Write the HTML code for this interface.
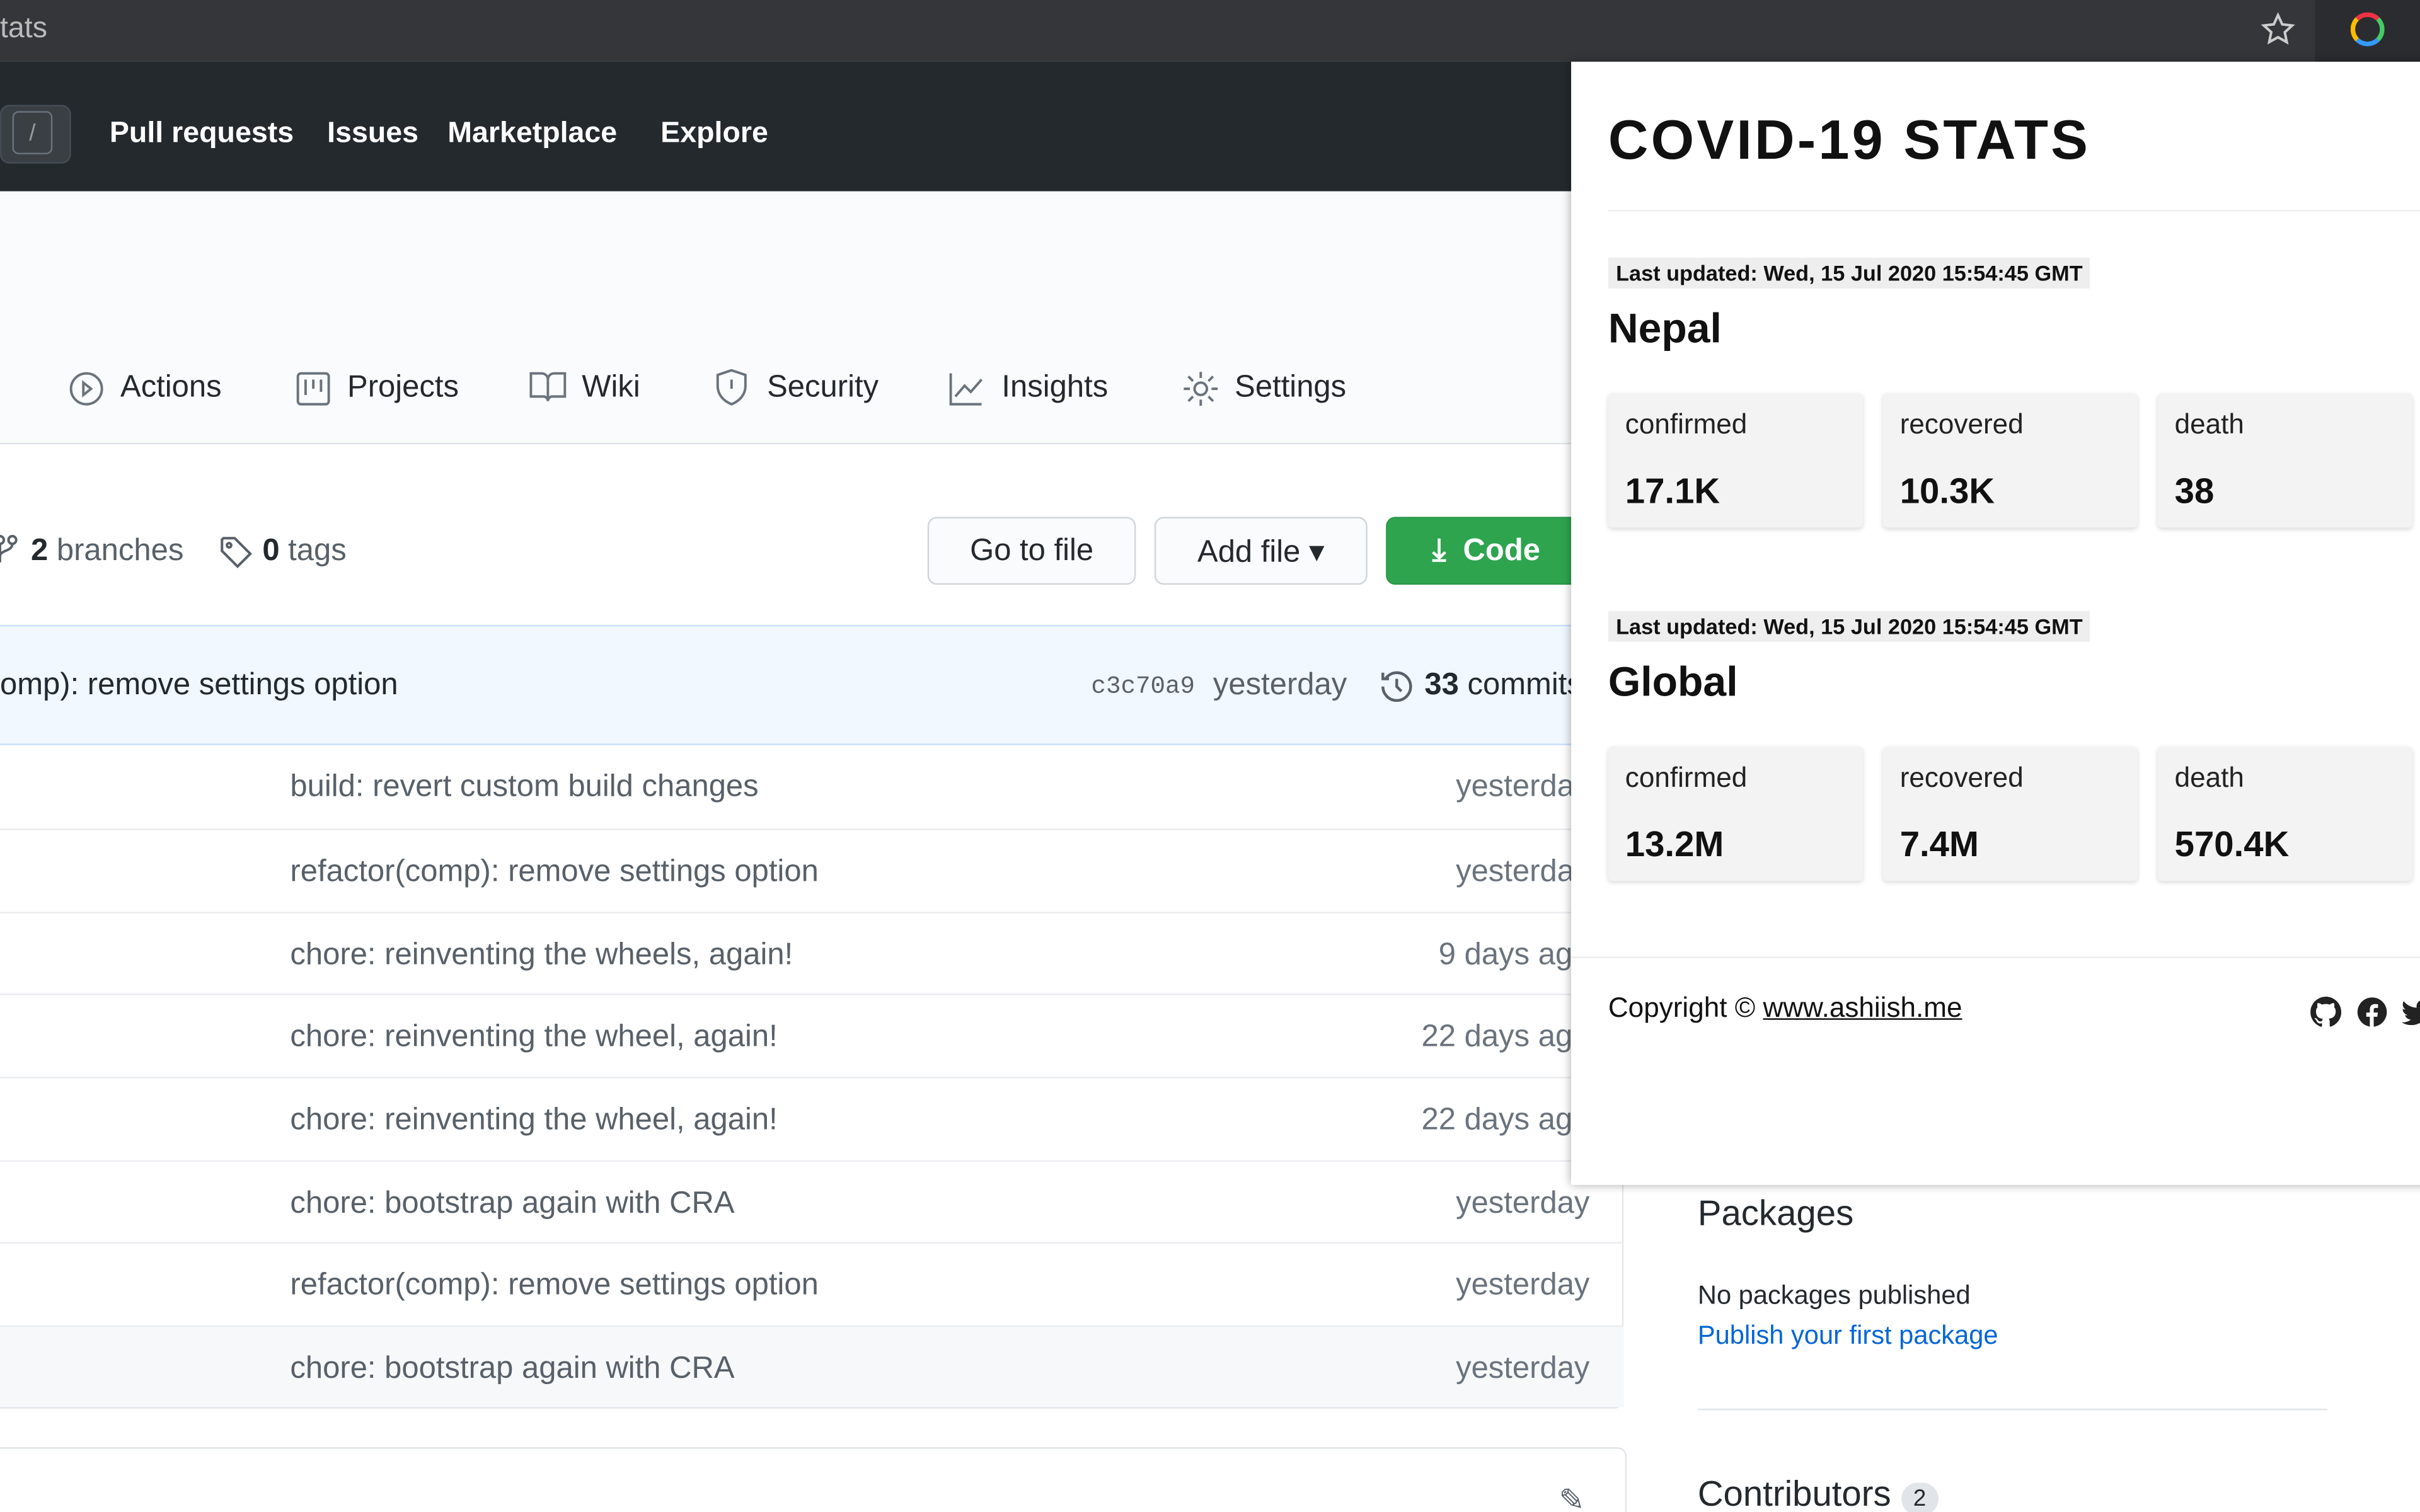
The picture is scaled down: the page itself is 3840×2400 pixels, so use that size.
<!DOCTYPE html>
<html><head><meta charset="utf-8"><style>
html,body{margin:0;padding:0;width:3840px;height:2400px;overflow:hidden;background:#fff}
#w{position:absolute;left:0;top:0;width:1568px;height:980px;transform:scale(2.44898);transform-origin:0 0;font-family:"Liberation Sans",sans-serif;overflow:hidden;background:#fff}
.a{position:absolute;white-space:nowrap}
.nav{color:#fff;font-weight:bold;font-size:19px;top:76px}
.tab{top:240px;font-size:20px;color:#24292e}
.btn{position:absolute;top:335px;height:44px;border:1px solid #d1d5da;border-radius:6px;background:#fafbfc;box-sizing:border-box;font-size:20px;color:#24292e;display:flex;align-items:center;justify-content:center}
.row{position:absolute;left:0;width:1052px;height:53px;border-top:1px solid #eaecef;box-sizing:border-box}
.row .m{position:absolute;left:188px;top:16px;font-size:20px;color:#586069}
.row .t{position:absolute;right:22px;top:16px;font-size:20px;color:#6a737d}
.pop{position:absolute;left:1018px;top:40px;width:560px;height:728px;background:#fff;box-shadow:0 0 6px rgba(0,0,0,.35)}
.lu{position:absolute;left:24px;height:20px;background:#eeeeee;font-size:14px;font-weight:bold;padding:0 5px;line-height:20px;color:#111}
.h{position:absolute;left:24px;font-size:27px;font-weight:bold;color:#111}
.card{position:absolute;width:165px;height:87px;background:#f3f3f3;box-shadow:0 1px 3px rgba(0,0,0,.15);border-radius:3px}
.card .l{position:absolute;left:11px;top:10px;font-size:18px;color:#222}
.card .v{position:absolute;left:11px;top:50px;font-size:23px;font-weight:bold;color:#111}
</style></head><body><div id="w">
<div class="a" style="left:0;top:0;width:1568px;height:40px;background:#35363a"></div>
<div class="a" style="left:0;top:8px;font-size:19px;color:#bbb">tats</div>
<svg class="a" style="left:1465px;top:8px" width="22" height="22" viewBox="0 0 24 24" fill="none" stroke="#ccc" stroke-width="1.8"><path d="M12 2l3 6.5 7 .8-5.2 4.8 1.4 7L12 17.6 5.8 21l1.4-7L2 9.3l7-.8z"/></svg>
<div class="a" style="left:1500px;top:0;width:68px;height:40px;background:#2b2c30"></div>
<div class="a" style="left:1523px;top:8px;width:22px;height:22px;border-radius:50%;border:3px solid;border-color:#e34 #4c6 #39f #fb0;box-sizing:border-box"></div>
<div class="a" style="left:0;top:40px;width:1568px;height:84px;background:#24292e"></div>
<div class="a" style="left:0;top:68px;width:46px;height:38px;border:1px solid #444d56;border-radius:6px;background:#3a3f44;box-sizing:border-box"></div>
<div class="a" style="left:8px;top:72px;width:26px;height:28px;border:1px solid #6a737d;border-radius:4px;color:#959da5;font-size:15px;text-align:center;line-height:28px;box-sizing:border-box">/</div>
<div class="a nav" style="left:71px">Pull requests</div>
<div class="a nav" style="left:212px">Issues</div>
<div class="a nav" style="left:290px">Marketplace</div>
<div class="a nav" style="left:428px">Explore</div>
<div class="a" style="left:0;top:124px;width:1568px;height:163px;background:#fafbfc;border-bottom:1px solid #e1e4e8"></div>
<svg class="a" style="left:44px;top:240px" width="24" height="24" viewBox="0 0 24 24" fill="none" stroke="#6a737d" stroke-width="1.6"><circle cx="12" cy="12" r="10"/><path d="M10 8l5 4-5 4z"/></svg>
<div class="a tab" style="left:78px">Actions</div>
<svg class="a" style="left:191px;top:240px" width="24" height="24" viewBox="0 0 24 24" fill="none" stroke="#6a737d" stroke-width="1.6"><rect x="2" y="2" width="20" height="20" rx="2"/><path d="M7 6v10M12 6v6M17 6v8"/></svg>
<div class="a tab" style="left:225px">Projects</div>
<svg class="a" style="left:343px;top:240px" width="24" height="22" viewBox="0 0 24 22" fill="none" stroke="#6a737d" stroke-width="1.6"><path d="M1 2h7a4 4 0 014 4v14a3 3 0 00-3-3H1zM23 2h-7a4 4 0 00-4 4v14a3 3 0 013-3h8z"/></svg>
<div class="a tab" style="left:377px">Wiki</div>
<svg class="a" style="left:463px;top:239px" width="22" height="24" viewBox="0 0 22 24" fill="none" stroke="#6a737d" stroke-width="1.6"><path d="M11 1L2 4v7c0 6 4 10 9 12 5-2 9-6 9-12V4z"/><path d="M11 7v6"/></svg>
<div class="a tab" style="left:497px">Security</div>
<svg class="a" style="left:614px;top:240px" width="24" height="24" viewBox="0 0 24 24" fill="none" stroke="#6a737d" stroke-width="1.6"><path d="M2 2v20h20M5 17l6-7 4 4 7-8"/></svg>
<div class="a tab" style="left:649px">Insights</div>
<svg class="a" style="left:766px;top:240px" width="24" height="24" viewBox="0 0 24 24" fill="none" stroke="#6a737d" stroke-width="1.6"><circle cx="12" cy="12" r="4"/><path d="M12 1v4M12 19v4M1 12h4M19 12h4M4 4l3 3M17 17l3 3M4 20l3-3M17 7l3-3"/></svg>
<div class="a tab" style="left:800px">Settings</div>
<svg class="a" style="left:-4px;top:346px" width="16" height="20" viewBox="0 0 16 20" fill="none" stroke="#586069" stroke-width="1.6"><circle cx="4" cy="4" r="2.5"/><circle cx="12" cy="4" r="2.5"/><path d="M4 6.5v12M12 6.5c0 5-8 4-8 8"/></svg>
<div class="a" style="left:20px;top:346px;font-size:20px;color:#586069"><b style="color:#24292e">2</b> branches</div>
<svg class="a" style="left:142px;top:347px" width="22" height="22" viewBox="0 0 24 24" fill="none" stroke="#586069" stroke-width="1.8"><path d="M2 3v8l11 11 9-9L11 2H3z"/><circle cx="7" cy="7" r="1.5"/></svg>
<div class="a" style="left:170px;top:346px;font-size:20px;color:#586069"><b style="color:#24292e">0</b> tags</div>
<div class="btn" style="left:601px;width:135px">Go to file</div>
<div class="btn" style="left:748px;width:138px">Add file ▾</div>
<div class="btn" style="left:898px;width:130px;background:#2ea44f;border-color:#2c974b;color:#fff;font-weight:bold">⤓&nbsp; Code</div>
<div class="a" style="left:-10px;top:405px;width:1062px;height:78px;background:#f1f8ff;border:1px solid #c8e1ff;box-sizing:border-box"></div>
<div class="a" style="left:0;top:433px;font-size:20px;color:#24292e">omp): remove settings option</div>
<div class="a" style="left:707px;top:436px;font-size:16px;font-family:'Liberation Mono',monospace;color:#586069">c3c70a9</div>
<div class="a" style="left:786px;top:433px;font-size:20px;color:#586069">yesterday</div>
<svg class="a" style="left:893px;top:433px" width="24" height="24" viewBox="0 0 24 24" fill="none" stroke="#586069" stroke-width="1.8"><path d="M3 12a9 9 0 109-9 9 9 0 00-7 3.5M3 3v4h4M12 7v5l3 3"/></svg>
<div class="a" style="left:923px;top:433px;font-size:20px;color:#24292e"><b>33</b> commits</div>
<div class="a" style="left:-10px;top:483px;width:1062px;height:430px;border:1px solid #e1e4e8;border-top:none;border-radius:0 0 6px 6px;box-sizing:border-box"></div>
<div class="row" style="top:483px;border-top:none"><span class="m">build: revert custom build changes</span><span class="t">yesterday</span></div>
<div class="row" style="top:537px"><span class="m">refactor(comp): remove settings option</span><span class="t">yesterday</span></div>
<div class="row" style="top:591px"><span class="m">chore: reinventing the wheels, again!</span><span class="t">9 days ago</span></div>
<div class="row" style="top:644px"><span class="m">chore: reinventing the wheel, again!</span><span class="t">22 days ago</span></div>
<div class="row" style="top:698px"><span class="m">chore: reinventing the wheel, again!</span><span class="t">22 days ago</span></div>
<div class="row" style="top:752px"><span class="m">chore: bootstrap again with CRA</span><span class="t">yesterday</span></div>
<div class="row" style="top:805px"><span class="m">refactor(comp): remove settings option</span><span class="t">yesterday</span></div>
<div class="row" style="top:859px;background:#f6f8fa;height:53px"><span class="m">chore: bootstrap again with CRA</span><span class="t">yesterday</span></div>
<div class="a" style="left:-10px;top:938px;width:1062px;height:80px;border:1px solid #e1e4e8;border-radius:6px"></div>
<div class="a" style="left:1010px;top:960px;font-size:20px;color:#586069">✎</div>
<div class="a" style="left:1100px;top:773px;font-size:23px;color:#24292e">Packages</div>
<div class="a" style="left:1100px;top:830px;font-size:17px;color:#24292e">No packages published</div>
<div class="a" style="left:1100px;top:856px;font-size:17px;color:#0366d6">Publish your first package</div>
<div class="a" style="left:1100px;top:913px;width:408px;height:1px;background:#e1e4e8"></div>
<div class="a" style="left:1100px;top:955px;font-size:23px;color:#24292e">Contributors <span style="display:inline-block;background:#e1e4e8;border-radius:12px;font-size:15px;padding:2px 8px">2</span></div>
<div class="pop">
<div class="a" style="left:24px;top:30px;font-size:36px;font-weight:900;color:#111;letter-spacing:1.7px">COVID-19 STATS</div>
<div class="a" style="left:24px;top:96px;width:540px;height:1px;background:#eee"></div>
<div class="lu" style="top:127px">Last updated: Wed, 15 Jul 2020 15:54:45 GMT</div>
<div class="h" style="top:158px">Nepal</div>
<div class="card" style="left:24px;top:215px"><span class="l">confirmed</span><span class="v">17.1K</span></div>
<div class="card" style="left:202px;top:215px"><span class="l">recovered</span><span class="v">10.3K</span></div>
<div class="card" style="left:380px;top:215px"><span class="l">death</span><span class="v">38</span></div>
<div class="lu" style="top:356px">Last updated: Wed, 15 Jul 2020 15:54:45 GMT</div>
<div class="h" style="top:387px">Global</div>
<div class="card" style="left:24px;top:444px"><span class="l">confirmed</span><span class="v">13.2M</span></div>
<div class="card" style="left:202px;top:444px"><span class="l">recovered</span><span class="v">7.4M</span></div>
<div class="card" style="left:380px;top:444px"><span class="l">death</span><span class="v">570.4K</span></div>
<div class="a" style="left:0;top:580px;width:560px;height:1px;background:#eee"></div>
<div class="a" style="left:24px;top:603px;font-size:18px;color:#111">Copyright © <u>www.ashiish.me</u></div>
<svg class="a" style="left:479px;top:606px" width="20" height="20" viewBox="0 0 16 16"><path fill="#222" d="M8 0C3.6 0 0 3.6 0 8c0 3.5 2.3 6.5 5.5 7.6.4.1.5-.2.5-.4v-1.4c-2.2.5-2.7-1-2.7-1-.4-.9-.9-1.2-.9-1.2-.7-.5.1-.5.1-.5.8.1 1.200.8 1.2.8.7 1.3 1.9.9 2.3.7.1-.5.3-.9.5-1.1-1.8-.2-3.6-.9-3.6-4 0-.9.3-1.6.8-2.1-.1-.2-.4-1 .1-2.1 0 0 .7-.2 2.2.8.6-.2 1.3-.3 2-.3s1.4.1 2 .3c1.5-1 2.2-.8 2.2-.8.4 1.100.2 1.9.1 2.1.5.6.8 1.3.8 2.1 0 3.1-1.9 3.7-3.6 3.9.3.3.5.8.5 1.5v2.2c0 .2.1.5.6.4C13.7 14.5 16 11.5 16 8c0-4.4-3.6-8-8-8z"/></svg>
<svg class="a" style="left:509px;top:606px" width="20" height="20" viewBox="0 0 20 20"><circle cx="10" cy="10" r="9.5" fill="#222"/><path fill="#fff" d="M11 20v-7h2.3l.4-2.7H11V8.6c0-.8.3-1.3 1.4-1.3h1.4V4.9c-.3 0-1.1-.1-2-.1-2 0-3.3 1.2-3.3 3.4v2.1H6.2V13h2.3v7z"/></svg>
<svg class="a" style="left:538px;top:608px" width="20" height="17" viewBox="0 0 24 20"><path fill="#222" d="M24 2.4a10 10 0 01-2.8.8A5 5 0 0023.3.4a10 10 0 01-3.1 1.2A4.9 4.9 0 0011.8 6 14 14 0 011.7.9a4.9 4.9 0 001.5 6.6A4.900 4.9 0 01.9 6.9a4.9 4.9 0 004 4.8 5 5 0 01-2.2.1 4.9 4.9 0 004.6 3.4A9.900 9.9 0 010 17.3 14 14 0 007.5 19.5c9 0 14-7.500 14-14v-.6A10 10 0 0024 2.4z"/></svg>
</div>
</div></body></html>
